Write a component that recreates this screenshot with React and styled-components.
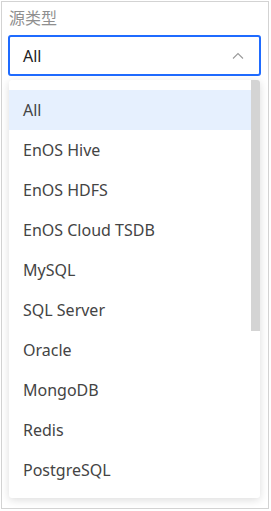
import React from "react";
import styled, { createGlobalStyle } from "styled-components";

const Global = createGlobalStyle`
  html, body { margin: 0; padding: 0; background: #fff; }
  body { font-family: "Noto Sans", "Noto Sans CJK SC", sans-serif; }
`;

const Page = styled.div`
  padding: 1px;
  width: 271px;
  height: 511px;
  box-sizing: border-box;
`;

const Frame = styled.div`
  width: 268px;
  height: 508px;
  box-sizing: border-box;
  border: 1px solid #d3d3d3;
  padding: 4px 7px 0 6px;
  display: flex;
  flex-direction: column;
`;

const Label = styled.div`
  font-size: 16px;
  line-height: 24px;
  color: #8f8f8f;
  padding-left: 1px;
  margin-bottom: 5px;
`;

const Trigger = styled.div`
  height: 41px;
  box-sizing: border-box;
  border: 2px solid #1f6bff;
  border-radius: 3px;
  display: flex;
  align-items: center;
  justify-content: space-between;
  padding: 0 15px 0 13px;
  font-size: 16px;
  color: #222;
`;

const Menu = styled.div`
  margin: 4px 1px 0 1px;
  height: 418px;
  border-radius: 3px;
  background: #fff;
  box-shadow: 0 2px 8px rgba(0, 0, 0, 0.14);
  overflow: hidden;
  display: flex;
`;

const List = styled.div`
  flex: 1;
  padding: 10px 0 8px;
`;

const Track = styled.div`
  width: 9px;
  flex-shrink: 0;
`;

const Thumb = styled.div`
  height: 251px;
  background: #d4d4d4;
`;

const Option = styled.div`
  height: 40px;
  display: flex;
  align-items: center;
  padding-left: 14px;
  font-size: 16px;
  color: #444;
  background: ${(p) => (p.$active ? "#e6f0fe" : "transparent")};
`;

const options = [
  "All",
  "EnOS Hive",
  "EnOS HDFS",
  "EnOS Cloud TSDB",
  "MySQL",
  "SQL Server",
  "Oracle",
  "MongoDB",
  "Redis",
  "PostgreSQL",
];

export default function App() {
  return (
    <Page>
      <Global />
      <Frame>
        <Label>源类型</Label>
        <Trigger>
          <span>All</span>
          <svg width="12" height="7" viewBox="0 0 12 7">
            <path d="M1 6.5 L6 1.5 L11 6.5" fill="none" stroke="#9a9a9a" strokeWidth="1.1" />
          </svg>
        </Trigger>
        <Menu>
          <List>
            {options.map((o, i) => (
              <Option key={o} $active={i === 0}>
                {o}
              </Option>
            ))}
          </List>
          <Track>
            <Thumb />
          </Track>
        </Menu>
      </Frame>
    </Page>
  );
}
